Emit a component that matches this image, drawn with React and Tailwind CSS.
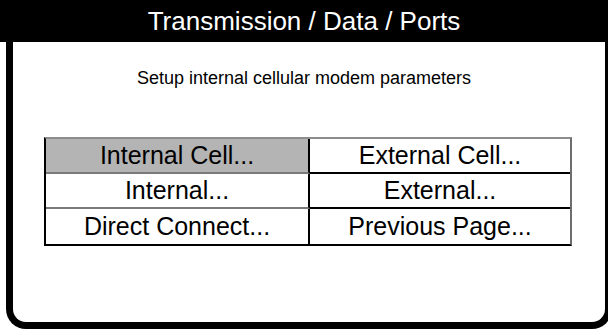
export default function App() {
  const rows = [
    ["Internal Cell...", "External Cell..."],
    ["Internal...", "External..."],
    ["Direct Connect...", "Previous Page..."],
  ];
  return (
    <div className="w-[608px] h-[329px] bg-white overflow-hidden font-['Liberation_Sans',Arial,sans-serif] text-black">
      <div className="h-[42px] bg-black text-white text-[26px] leading-none flex items-center justify-center pb-[1px]">
        Transmission / Data / Ports
      </div>
      <div className="ml-[6px] w-[606px] h-[287px] border-[7px] border-t-0 border-black rounded-b-[20px] flex flex-col items-center">
        <p className="mt-[26px] text-[18px] leading-[21px] -ml-[10px]">Setup internal cellular modem parameters</p>
        <div className="mt-[48px] ml-[-2px] w-[528px] grid grid-cols-[264px_1fr] border-t-2 border-t-[#8c8c8c] border-l-2 border-l-black border-r-2 border-r-[#6e6e6e] border-b-2 border-b-black">
          {rows.map((r, i) => (
            <div key={i} className="contents">
              <div
                className={
                  "h-[35px] flex items-center justify-center text-[25px] leading-none border-r-2 border-r-black " +
                  (i < 2 ? "border-b-2 border-b-[#7a7a7a] " : "") +
                  (i === 0 ? "bg-[#b4b4b4]" : "bg-white")
                }
              >
                {r[0]}
              </div>
              <div
                className={
                  "h-[35px] flex items-center justify-center text-[25px] leading-none bg-white " +
                  (i < 2 ? "border-b-2 border-b-black" : "")
                }
              >
                {r[1]}
              </div>
            </div>
          ))}
        </div>
      </div>
    </div>
  );
}
